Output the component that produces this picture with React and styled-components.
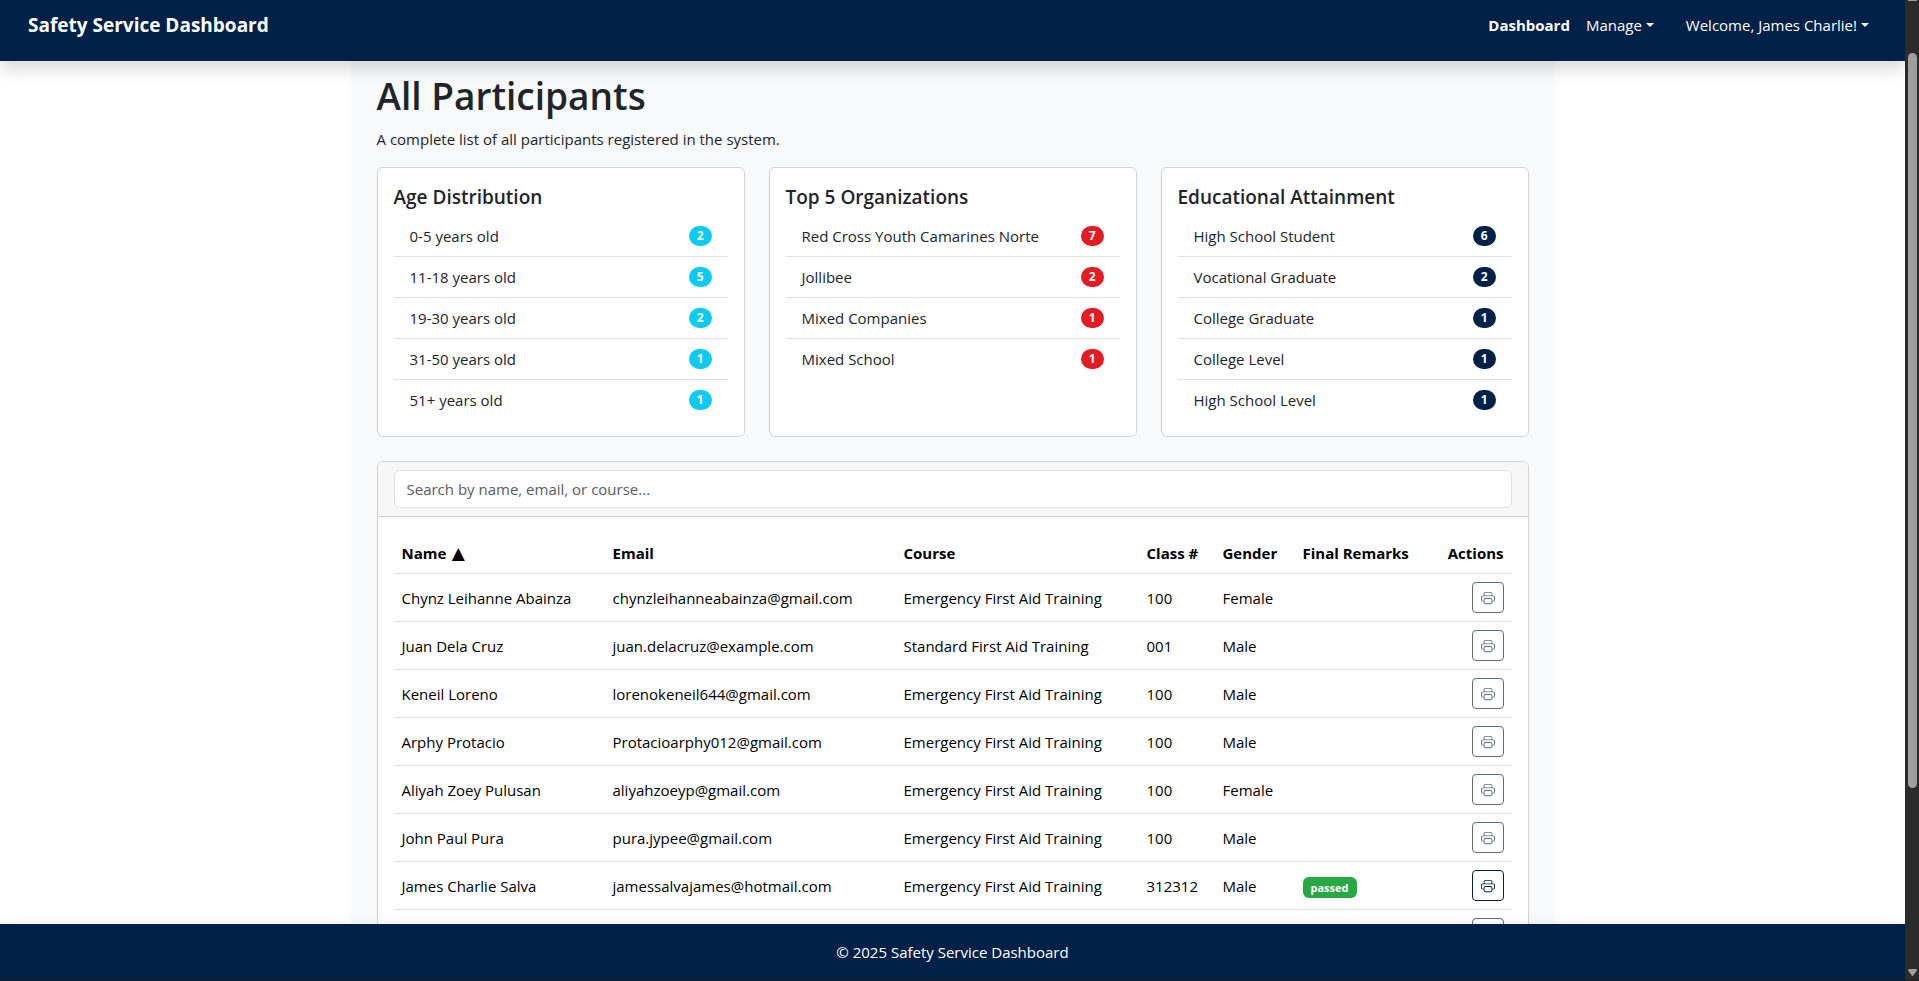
import React from "react";
import styled, { createGlobalStyle } from "styled-components";
import { BsPrinter } from "react-icons/bs";

const NAVY = "#002147";
const INK = "#212529";

const GlobalStyle = createGlobalStyle`
  *, *::before, *::after { box-sizing: border-box; }
  body {
    margin: 0;
    background: #fff;
    color: ${INK};
    font-family: "Segoe UI", "Open Sans", "Noto Sans", sans-serif;
    font-size: 15px;
    line-height: 24px;
  }
  h1, h2, p, ul { margin: 0; padding: 0; }
  button, input { font: inherit; color: inherit; }
`;

const Shell = styled.div`
  display: flex;
  height: 100vh;
  overflow: hidden;
  border-bottom: 1px solid #1f1f1f;
`;

const Page = styled.div`
  flex: 1;
  min-width: 0;
  display: flex;
  flex-direction: column;
  overflow: hidden;
`;

const Navbar = styled.header`
  position: relative;
  z-index: 2;
  flex: none;
  display: flex;
  align-items: flex-start;
  justify-content: space-between;
  padding: 5px 36px 16px 28px;
  background: ${NAVY};
  color: #fff;
  box-shadow: 0 8px 16px rgba(0, 0, 0, 0.15);
`;

const Brand = styled.a`
  color: inherit;
  font-size: 19px;
  line-height: 40px;
  font-weight: 700;
  text-decoration: none;
`;

const NavLinks = styled.nav`
  display: flex;
  align-items: center;
  gap: 16px;
  padding: 8px 0;
`;

const NavLink = styled.a`
  color: inherit;
  font-weight: 700;
  text-decoration: none;
`;

const NavMenu = styled.button`
  display: flex;
  align-items: center;
  gap: 4px;
  padding: 0;
  border: 0;
  background: none;
  margin-left: ${(p) => (p.$apart ? "16px" : "0")};

  &::after {
    content: "";
    border-top: 4px solid currentColor;
    border-left: 4px solid transparent;
    border-right: 4px solid transparent;
  }
`;

const Scroller = styled.main`
  flex: 1;
  min-height: 0;
  overflow: hidden;
`;

const Container = styled.div`
  max-width: 1200px;
  margin: 0 auto;
  padding: 10px 24px 24px;
  background: #f8f9fb;
  box-shadow: 0 0 3px 2px #f8f9fb;
`;

const Title = styled.h1`
  margin-bottom: 6px;
  font-size: 37px;
  line-height: 50px;
  font-weight: 600;
`;

const Lead = styled.p`
  margin-bottom: 16px;
`;

const Stats = styled.div`
  display: grid;
  grid-template-columns: repeat(3, 1fr);
  gap: 24px;
  margin-bottom: 24px;
`;

const Card = styled.section`
  border: 1px solid #d3d4d5;
  border-radius: 6px;
  background: #fff;
  overflow: hidden;
`;

const CardBody = styled.div`
  padding: 16px;
`;

const CardTitle = styled.h2`
  margin-bottom: 6px;
  font-size: 19px;
  line-height: 26px;
  font-weight: 600;
`;

const StatList = styled.ul`
  list-style: none;
`;

const StatItem = styled.li`
  display: flex;
  align-items: center;
  justify-content: space-between;
  padding: 8px 16px;

  & + & { border-top: 1px solid #dee2e6; }
`;

const Badge = styled.span`
  display: inline-block;
  padding: 4px 8px;
  border-radius: 10px;
  background: ${(p) => p.$color};
  color: #fff;
  font-size: 12px;
  line-height: 12px;
  font-weight: 700;
  vertical-align: middle;
`;

const RemarkBadge = styled(Badge)`
  padding: 5px 8px 4px;
  border-radius: 6px;
  font-size: 11px;
`;

const CardHeader = styled.div`
  padding: 8px 16px;
  border-bottom: 1px solid #d0d0d0;
  background: #f7f7f7;
`;

const SearchInput = styled.input`
  display: block;
  width: 100%;
  height: 38px;
  padding: 6px 12px;
  border: 1px solid #dee2e6;
  border-radius: 6px;
  background: #fff;

  &::placeholder { color: #595c5f; opacity: 1; }
`;

const Table = styled.table`
  width: 100%;
  table-layout: fixed;
  border-collapse: separate;
  border-spacing: 0;
  color: #000;
`;

const Col = styled.col`
  width: ${(p) => p.$width};
`;

const Cell = styled.td`
  height: ${(p) => (p.as === "th" ? "41px" : "48px")};
  padding: 0 8px;
  border-bottom: 1px solid #dee2e6;
  text-align: ${(p) => (p.$end ? "right" : "left")};
  vertical-align: middle;
  white-space: nowrap;
`;

const SortMark = styled.span`
  font-family: "DejaVu Sans", sans-serif;
  font-size: 17px;
  line-height: 16px;
  font-weight: 400;
`;

const PrintButton = styled.button`
  display: inline-flex;
  align-items: center;
  justify-content: center;
  width: 32px;
  height: 31px;
  padding: 0;
  border: 1px solid ${NAVY};
  border-radius: 4px;
  background: transparent;
  color: ${NAVY};
  font-size: 14px;
  vertical-align: middle;

  &:disabled { opacity: 0.65; }
`;

const Footer = styled.footer`
  position: relative;
  flex: none;
  padding: 16px;
  background: ${NAVY};
  color: #fff;
  text-align: center;
  box-shadow: 0 -2px 10px rgba(0, 0, 0, 0.05);
`;

const Scrollbar = styled.div`
  flex: none;
  display: flex;
  flex-direction: column;
  align-items: center;
  width: 14px;
  background: #2b2b2b;
`;

const ScrollUp = styled.div`
  width: 9px;
  height: 1px;
  margin-bottom: 52px;
  background: #9f9f9f;
`;

const Thumb = styled.div`
  width: 9px;
  flex: 0 1 75%;
  border-radius: 5px;
  background: #9f9f9f;
`;

const ScrollDown = styled.svg`
  width: 9px;
  height: 7px;
  margin: auto 0 4px;
`;

const stats = [
  {
    title: "Age Distribution",
    color: "#0dcaf0",
    items: [["0-5 years old", 2], ["11-18 years old", 5], ["19-30 years old", 2], ["31-50 years old", 1], ["51+ years old", 1]],
  },
  {
    title: "Top 5 Organizations",
    color: "#e31b23",
    items: [["Red Cross Youth Camarines Norte", 7], ["Jollibee", 2], ["Mixed Companies", 1], ["Mixed School", 1]],
  },
  {
    title: "Educational Attainment",
    color: NAVY,
    items: [["High School Student", 6], ["Vocational Graduate", 2], ["College Graduate", 1], ["College Level", 1], ["High School Level", 1]],
  },
];

const FIRST_AID = "Emergency First Aid Training";

const participants = [
  ["Chynz Leihanne Abainza", "chynzleihanneabainza@gmail.com", FIRST_AID, "100", "Female", ""],
  ["Juan Dela Cruz", "juan.delacruz@example.com", "Standard First Aid Training", "001", "Male", ""],
  ["Keneil Loreno", "lorenokeneil644@gmail.com", FIRST_AID, "100", "Male", ""],
  ["Arphy Protacio", "Protacioarphy012@gmail.com", FIRST_AID, "100", "Male", ""],
  ["Aliyah Zoey Pulusan", "aliyahzoeyp@gmail.com", FIRST_AID, "100", "Female", ""],
  ["John Paul Pura", "pura.jypee@gmail.com", FIRST_AID, "100", "Male", ""],
  ["James Charlie Salva", "jamessalvajames@hotmail.com", FIRST_AID, "312312", "Male", "passed"],
  ["", "", "", "", "", ""],
];

const columnWidths = ["211px", "auto", "243px", "76px", "80px", "144px", "73px"];
const headings = ["Name", "Email", "Course", "Class #", "Gender", "Final Remarks"];

function StatCard({ title, color, items }) {
  return (
    <Card>
      <CardBody>
        <CardTitle>{title}</CardTitle>
        <StatList>
          {items.map(([label, count]) => (
            <StatItem key={label}>
              {label}
              <Badge $color={color}>{count}</Badge>
            </StatItem>
          ))}
        </StatList>
      </CardBody>
    </Card>
  );
}

function ParticipantRow({ person }) {
  const [name, email, course, classNo, gender, remarks] = person;
  return (
    <tr>
      <Cell>{name}</Cell>
      <Cell>{email}</Cell>
      <Cell>{course}</Cell>
      <Cell>{classNo}</Cell>
      <Cell>{gender}</Cell>
      <Cell>{remarks && <RemarkBadge $color="#28a745">{remarks}</RemarkBadge>}</Cell>
      <Cell $end>
        <PrintButton type="button" aria-label="Print certificate" disabled={!remarks}>
          <BsPrinter />
        </PrintButton>
      </Cell>
    </tr>
  );
}

export default function App() {
  return (
    <>
      <GlobalStyle />
      <Shell>
        <Page>
          <Navbar>
            <Brand href="#">Safety Service Dashboard</Brand>
            <NavLinks>
              <NavLink href="#">Dashboard</NavLink>
              <NavMenu type="button">Manage</NavMenu>
              <NavMenu type="button" $apart>Welcome, James Charlie!</NavMenu>
            </NavLinks>
          </Navbar>
          <Scroller>
            <Container>
              <Title>All Participants</Title>
              <Lead>A complete list of all participants registered in the system.</Lead>
              <Stats>
                {stats.map((s) => <StatCard key={s.title} {...s} />)}
              </Stats>
              <Card>
                <CardHeader>
                  <SearchInput
                    type="text"
                    aria-label="Search participants"
                    placeholder="Search by name, email, or course..."
                  />
                </CardHeader>
                <CardBody>
                  <Table>
                    <colgroup>
                      {columnWidths.map((w, i) => <Col key={i} $width={w} />)}
                    </colgroup>
                    <thead>
                      <tr>
                        {headings.map((h, i) => (
                          <Cell as="th" scope="col" key={h} aria-sort={i === 0 ? "ascending" : undefined}>
                            {h}
                            {i === 0 && <SortMark> ▲</SortMark>}
                          </Cell>
                        ))}
                        <Cell as="th" scope="col" $end>Actions</Cell>
                      </tr>
                    </thead>
                    <tbody>
                      {participants.map((p, i) => <ParticipantRow key={i} person={p} />)}
                    </tbody>
                  </Table>
                </CardBody>
              </Card>
            </Container>
          </Scroller>
          <Footer>© 2025 Safety Service Dashboard</Footer>
        </Page>
        <Scrollbar aria-hidden="true">
          <ScrollUp />
          <Thumb />
          <ScrollDown viewBox="0 0 9 7">
            <path d="M1 0h7q1.500 .5 .5 2L5.500 6.300q-1 1.200-2 0L.5 2Q-.5 .5 1 0z" fill="#9f9f9f" />
          </ScrollDown>
        </Scrollbar>
      </Shell>
    </>
  );
}
